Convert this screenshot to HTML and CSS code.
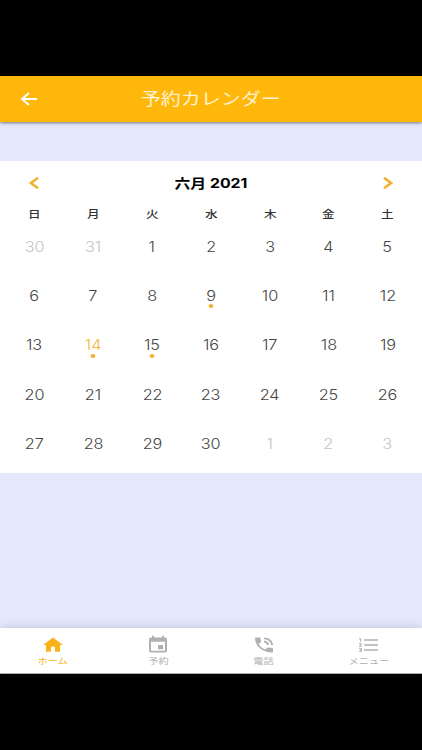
FILE: index.html
```html
<!DOCTYPE html>
<html lang="ja">
<head>
  <meta charset="UTF-8" />
  <meta name="viewport" content="width=device-width, initial-scale=1.0"/>
  <title>予約カレンダー</title>
  <link rel="stylesheet" href="styles.css">
</head>
<body>
  <div class="app">
    <header class="header">
      <button class="voltar" aria-label="戻る">
        <svg width="18" height="14" viewBox="0 0 18 14"><path d="M17 7H2.5M9 1L2 7l7 6" /></svg>
      </button>
      <h1><span>予約カレンダー</span></h1>
    </header>

    <main>
      <section class="calendar">
        <div class="month">
          <button aria-label="前の月"><svg width="10" height="12" viewBox="0 0 10 12"><path d="M9 .8L2 6l7 5.200" /></svg></button>
          <h2><span>六月 2021</span></h2>
          <button aria-label="次の月"><svg width="10" height="12" viewBox="0 0 10 12"><path d="M1 .8L8 6l-7 5.200" /></svg></button>
        </div>
        <div class="week">
          <span>日</span><span>月</span><span>火</span><span>水</span><span>木</span><span>金</span><span>土</span>
        </div>
        <div class="days">
          <span class="out">30</span><span class="out">31</span><span>1</span><span>2</span><span>3</span><span>4</span><span>5</span>
          <span>6</span><span>7</span><span>8</span><span class="dot">9</span><span>10</span><span>11</span><span>12</span>
          <span>13</span><span class="today dot">14</span><span class="dot">15</span><span>16</span><span>17</span><span>18</span><span>19</span>
          <span>20</span><span>21</span><span>22</span><span>23</span><span>24</span><span>25</span><span>26</span>
          <span>27</span><span>28</span><span>29</span><span>30</span><span class="out">1</span><span class="out">2</span><span class="out">3</span>
        </div>
      </section>
    </main>

    <nav class="tabs">
      <a class="active">
        <svg viewBox="0 0 24 24" preserveAspectRatio="none"><path d="M10 20v-6h4v6h5v-8h3L12 3 2 12h3v8z" /></svg>
        <span>ホーム</span>
      </a>
      <a>
        <svg viewBox="0 0 24 24" preserveAspectRatio="none"><path d="M17 12h-5v5h5v-5zM16 1v2H8V1H6v2H5c-1.11 0-2 .9-2 2v14c0 1.1.89 2 2 2h14c1.1 0 2-.9 2-2V5c0-1.1-.9-2-2-2h-1V1h-2zm3 18H5V8h14v11z" /></svg>
        <span>予約</span>
      </a>
      <a>
        <svg viewBox="0 0 24 24" preserveAspectRatio="none"><path d="M20 15.5c-1.25 0-2.45-.2-3.57-.57-.35-.11-.74-.03-1.02.24l-2.2 2.2c-2.83-1.44-5.15-3.75-6.59-6.59l2.2-2.21c.28-.26.36-.65.25-1C8.7 6.45 8.5 5.25 8.5 4c0-.55-.45-1-1-1H4c-.55 0-1 .45-1 1 0 9.39 7.61 17 17 17 .55 0 1-.45 1-1v-3.5c0-.55-.45-1-1-1zM19 12h2c0-4.97-4.03-9-9-9v2c3.87 0 7 3.13 7 7zm-4 0h2c0-2.76-2.24-5-5-5v2c1.66 0 3 1.34 3 3z" /></svg>
        <span>電話</span>
      </a>
      <a>
        <svg viewBox="0 0 24 24" preserveAspectRatio="none"><path d="M2 17h2v.5H3v1h1v.5H2v1h3v-4H2v1zm1-9h1V4H2v1h1v3zm-1 3h1.800L2 13.100v.9h3v-1H3.200L5 10.900V10H2v1zm5-6v2h14V5H7zm0 14h14v-2H7v2zm0-6h14v-2H7v2z" /></svg>
        <span>メニュー</span>
      </a>
    </nav>
  </div>
</body>
</html>
```
FILE: styles.css
```css
* {
  box-sizing: border-box;
}
body {
  margin: 0;
  height: 750px;
  padding: 76px 0;
  background: #000;
  font-family: Inter, "Noto Sans CJK JP", sans-serif;
  overflow: hidden;
}
button {
  display: flex;
  padding: 0;
  border: none;
  background: transparent;
}
svg {
  display: block;
}
h1, h2 {
  margin: 0;
}
h1 span, h2 span, .week span, .days span, .tabs span {
  display: inline-block;
}
.app {
  display: flex;
  flex-direction: column;
  height: 598px;
  background: #e5e8fa;
}
.header {
  display: grid;
  grid-template-columns: 40px 1fr 40px;
  align-items: center;
  height: 46px;
  background: #ffb70c;
  box-shadow: 0 1px 3px rgba(0, 0, 0, 0.5);
}
.voltar {
  padding-left: 20px;
}
.voltar path, .month path {
  fill: none;
  stroke: #fff;
  stroke-width: 2;
}
.header h1 {
  color: #fff3d0;
  font-size: 16.5px;
  line-height: 46px;
  font-weight: 400;
  text-align: center;
}
.header h1 span {
  transform: scaleX(1.21);
}
main {
  flex: 1;
  padding-top: 39px;
}
.calendar {
  height: 312px;
  padding: 0 5px;
  background: #fff;
}
.month {
  display: flex;
  align-items: center;
  justify-content: space-between;
  height: 44px;
  padding: 0 24px;
}
.month path {
  stroke: #f4b02f;
  stroke-width: 2.6;
}
.month h2 {
  font-size: 13px;
  line-height: 20px;
}
.month h2 span {
  transform: scaleX(1.22);
}
.week, .days {
  display: grid;
  grid-template-columns: repeat(7, 1fr);
  justify-items: center;
}
.week {
  height: 20px;
  color: #333;
  font-size: 10.5px;
  line-height: 20px;
  font-weight: 500;
}
.week span {
  transform: scaleX(1.2);
}
.days {
  grid-auto-rows: 49.4px;
  padding-top: 11.5px;
  color: #444;
  font-size: 14px;
  line-height: 20px;
  font-weight: 300;
}
.days span {
  position: relative;
  height: 20px;
  transform: scaleX(1.16);
}
.days .out {
  color: #c4c4c4;
}
.days .today {
  color: #efb73e;
}
.dot::after {
  content: "";
  position: absolute;
  left: 50%;
  top: 18.5px;
  width: 4px;
  height: 4px;
  margin-left: -2px;
  border-radius: 50%;
  background: #f0b030;
}
.tabs {
  display: grid;
  grid-template-columns: repeat(4, 1fr);
  height: 46px;
  background: #fff;
  border-bottom: 1px solid #aaa;
  box-shadow: 0 -1px 8px rgba(80, 80, 120, 0.2);
}
.tabs a {
  display: flex;
  flex-direction: column;
  align-items: center;
  padding-top: 7px;
  color: #b0b0b0;
}
.tabs svg {
  width: 24px;
  height: 20px;
  fill: currentColor;
}
.tabs span {
  font-size: 8.5px;
  line-height: 12px;
  transform: scaleX(1.2);
}
.tabs .active {
  color: #f9b31a;
}
```
